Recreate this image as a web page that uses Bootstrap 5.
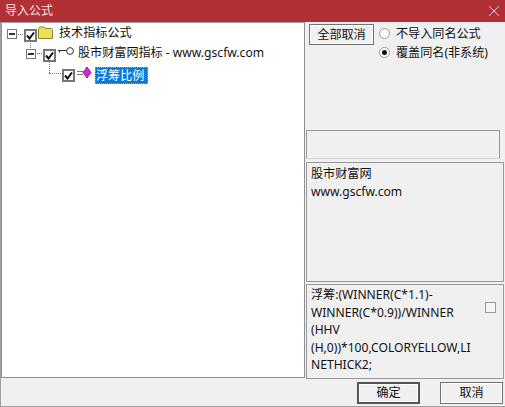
<!DOCTYPE html>
<html lang="zh"><head><meta charset="utf-8"><title>导入公式</title>
<link rel="stylesheet" href="https://cdn.jsdelivr.net/npm/bootstrap@5.3.0/dist/css/bootstrap.min.css">
<style>
html,body{height:100%;overflow:hidden}
body{background:#f0f0f0;font:12.1px/18px "Noto Sans","Noto Sans CJK SC",sans-serif;color:#111}
.dlg{width:505px;height:407px;border:solid #a0a0a0;border-width:0 0 1px 1px}
.ttl{height:22px;margin-left:-1px;background:#b13035;color:#f3e3e3;padding-left:5px;line-height:22px;font-size:12px}
.ttl svg{margin-right:6px}
.mid{height:356px}
.tree{width:304px;background:#fff;border:1px solid #8f8f8f;border-top-color:#a0a0a0;position:relative;flex:none}
.tn{position:absolute;display:flex;align-items:center;height:18px;white-space:nowrap}
.ln{position:absolute;border:0 dotted #777}
.pm{position:absolute;width:10px;height:10px;border:1px solid #777;background:#fff}
.pm::after{content:"";position:absolute;left:1px;right:1px;top:3px;height:2px;background:#333}
.ck{position:absolute;width:13px;height:13px;border:2px solid #777;background:#fff}
.hit{background:#0a78d7;color:#fff;outline:1px dotted #d8a030;outline-offset:-1px;padding:0 1px;height:17px;line-height:16px;width:53px}
.rt{width:198px;margin-left:1px;flex:none}
.top{height:108px;padding:2px 0 0 3px}
.tbtn{width:65px;height:21px;border:1px solid #707070;background:#f0f0f0;box-shadow:inset 0 0 0 1px #fff;padding:0;font:inherit;line-height:17px;color:#111;border-radius:0}
.rd{height:19px;white-space:nowrap;display:flex;align-items:center;gap:6px;margin-left:5px}
.dot{width:11px;height:11px;border-radius:50%;border:1px solid #999;background:#fff;position:relative;flex:none}
.on::after{content:"";position:absolute;left:2px;top:2px;width:5px;height:5px;border-radius:50%;background:#111}
.emp{height:29px;width:194px;border:1px solid #999;border-bottom-color:#d8d8d8;margin-bottom:3px}
.box{border:1px solid #999;background:#f0f0f0;padding:2px 4px;position:relative}
.info{height:120px;margin-bottom:2px}
.fm{height:95px;line-height:17.5px;padding:1px 21px 0 4px;word-break:break-all}
.fck{position:absolute;right:7px;top:17px;width:11px;height:11px;border:1px solid #999;background:#f4f4f4}
.foot{height:28px;padding:4px 2px 0 0;gap:20px}
.fb{width:63px;height:22px;border:1px solid #707070;background:#f0f0f0;padding:0;font:inherit;line-height:18px;color:#111;border-radius:0;box-shadow:inset 0 0 0 1px #fff}
.fb.dflt{border:2px solid #555}
</style></head><body>
<div class="dlg d-flex flex-column">
 <div class="ttl d-flex justify-content-between align-items-center">
  <span>导入公式</span>
  <svg width="10" height="10" viewBox="0 0 10 10"><path d="M0 0L10 10M10 0L0 10" stroke="#f3dcdc" fill="none"/></svg>
 </div>
 <div class="mid d-flex">
  <div class="tree">
   <i class="ln" style="left:14px;top:11px;width:9px;border-top-width:1px"></i>
   <i class="ln" style="left:28px;top:18px;height:9px;border-left-width:1px"></i>
   <i class="ln" style="left:33px;top:30px;width:9px;border-top-width:1px"></i>
   <i class="ln" style="left:47px;top:37px;height:13px;border-left-width:1px"></i>
   <i class="ln" style="left:47px;top:50px;width:12px;border-top-width:1px"></i>
   <i class="pm" style="left:5px;top:6px"></i>
   <i class="pm" style="left:24px;top:26px"></i>
   <i class="ck" style="left:22px;top:6px"><svg class="d-block" width="9" height="9" viewBox="0 0 9 9"><path d="M1 4.500L3.500 7.500L8 1.500" fill="none" stroke="#111" stroke-width="2"/></svg></i>
   <i class="ck" style="left:41px;top:26px"><svg class="d-block" width="9" height="9" viewBox="0 0 9 9"><path d="M1 4.500L3.500 7.500L8 1.500" fill="none" stroke="#111" stroke-width="2"/></svg></i>
   <i class="ck" style="left:60px;top:46px"><svg class="d-block" width="9" height="9" viewBox="0 0 9 9"><path d="M1 4.500L3.500 7.500L8 1.500" fill="none" stroke="#111" stroke-width="2"/></svg></i>
   <svg class="position-absolute" style="left:36px;top:3px" width="15" height="13" viewBox="0 0 15 13"><path d="M0.500 12.500V2.500L2 1H6L7.500 2.500H13.500L14.500 3.500V12.500Z" fill="#ece24f" stroke="#8a8440"/></svg>
   <svg class="position-absolute" style="left:56px;top:24px" width="16" height="9" viewBox="0 0 16 9"><path d="M0 3.500H10M1.500 3.500V5.500" stroke="#333" fill="none"/><circle cx="12" cy="4" r="3.400" fill="#fff" stroke="#333"/></svg>
   <svg class="position-absolute" style="left:75px;top:43px" width="17" height="13" viewBox="0 0 17 13"><path d="M0 5.500H6M0 8.500H6" stroke="#777" fill="none"/><path d="M10 1L14 6.500L10 12L6 6.500Z" fill="#e020d8" stroke="#502070" stroke-width=".8"/></svg>
   <div class="tn" style="left:57px;top:1px">技术指标公式</div>
   <div class="tn" style="left:76px;top:21px">股市财富网指标 - www.gscfw.com</div>
   <div class="tn hit" style="left:93px;top:44px">浮筹比例</div>
  </div>
  <div class="rt">
   <div class="top d-flex">
    <button class="tbtn flex-none">全部取消</button>
    <div><div class="rd"><i class="dot"></i>不导入同名公式</div><div class="rd"><i class="dot on"></i>覆盖同名(非系统)</div></div>
   </div>
   <div class="emp"></div>
   <div class="box info">股市财富网<br>www.gscfw.com</div>
   <div class="box fm">浮筹:(WINNER(C*1.1)-<br>WINNER(C*0.9))/WINNER<br>(HHV<br>(H,0))*100,COLORYELLOW,LI<br>NETHICK2;<i class="fck"></i></div>
  </div>
 </div>
 <div class="foot d-flex justify-content-end">
  <button class="fb dflt">确定</button><button class="fb">取消</button>
 </div>
</div>
</body></html>
